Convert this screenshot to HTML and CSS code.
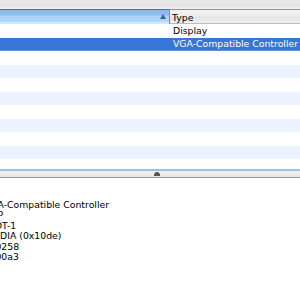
FILE: index.html
```html
<!DOCTYPE html>
<html>
<head>
<meta charset="utf-8">
<link rel="stylesheet" href="styles.css">
</head>
<body>
<div class="app">
  <div class="topband"></div>
  <div class="header">
    <div class="hcell hcell-sorted">
      <svg class="sort" width="6" height="5" viewBox="0 0 6 5"><path d="M3 0 L6 5 L0 5 Z" fill="#3d5f8f"/></svg>
    </div>
    <div class="hcell hcell-type">Type</div>
  </div>
  <div class="rows">
    <div class="row"><span class="cell">Display</span></div>
    <div class="row selected"><span class="cell">VGA-Compatible Controller</span></div>
    <div class="row"></div>
    <div class="row stripe"></div>
    <div class="row"></div>
    <div class="row stripe"></div>
    <div class="row"></div>
    <div class="row stripe"></div>
    <div class="row"></div>
    <div class="row stripe"></div>
    <div class="row"></div>
  </div>
  <div class="splitter">
    <svg class="grip" width="6" height="4" viewBox="0 0 6 4"><path d="M0 4 L0 2 L2 0 L4 0 L6 2 L6 4 Z" fill="#555"/></svg>
  </div>
  <div class="details">
    <div class="dline">VGA-Compatible Controller</div>
    <div class="dline">AGP</div>
    <div class="dline">SLOT-1</div>
    <div class="dline">NVIDIA (0x10de)</div>
    <div class="dline">0x0258</div>
    <div class="dline">0x00a3</div>
  </div>
</div>
</body>
</html>
```
FILE: styles.css
```css
html, body {
  margin: 0;
  padding: 0;
  background: #ffffff;
}
.app {
  width: 300px;
  height: 300px;
  overflow: hidden;
  font-family: "DejaVu Sans", sans-serif;
  font-size: 9.3px;
  color: #000;
}
.topband {
  height: 9px;
  background: linear-gradient(#e9e9e9, #e4e4e4 70%, #f2f2f2);
}
.header {
  display: flex;
  height: 15px;
}
.hcell {
  display: flex;
  align-items: center;
  box-sizing: border-box;
}
.hcell-sorted {
  width: 170px;
  justify-content: flex-end;
  padding-right: 3px;
  border-right: 1px solid #7c8fa9;
  background: linear-gradient(#3d70c8 0, #3d70c8 1px, #8db7ea 1px, #92bbec 6px, #a9d0f6 7px, #b3daf9 13px, #cdeafa 13px);
}
.sort {
  display: block;
}
.hcell-type {
  flex: 1;
  padding-left: 2px;
  background: linear-gradient(#8e8e8e 0, #8e8e8e 1px, #f4f4f4 1px, #ececec 7px, #e2e2e2 8px, #f0f0f0 14px, #bcbcbc 14px);
  padding-top: 1px;
}
.rows {
  height: 145px;
  overflow: hidden;
  display: flex;
  flex-direction: column;
}
.row {
  flex: none;
  height: 13.5px;
  display: flex;
  align-items: center;
}
.stripe {
  background: #edf3fe;
}
.selected {
  background: #3875d7;
  color: #ffffff;
  border-bottom: 1px solid #5e90e0;
  box-sizing: border-box;
}
.cell {
  margin-left: 173px;
  white-space: nowrap;
}
.splitter {
  height: 9px;
  box-sizing: border-box;
  border-top: 2px solid #9fbfe2;
  border-bottom: 1px solid #959595;
  background: linear-gradient(#eeeeee, #e7e7e7);
  display: flex;
  align-items: flex-start;
  padding-left: 154px;
  padding-top: 1px;
}
.grip {
  display: block;
}
.details {
  padding-top: 22px;
  margin-left: -16px;
  line-height: 10.4px;
  white-space: nowrap;
}
.dline {
  height: 10.4px;
}
```
